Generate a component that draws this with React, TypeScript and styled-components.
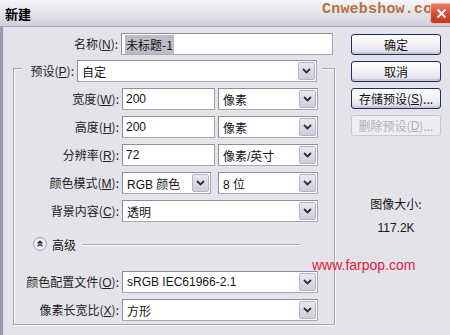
import React from 'react';
import styled, { createGlobalStyle } from 'styled-components';

const GlobalStyle = createGlobalStyle`
  html, body { margin: 0; padding: 0; background: #e4e3ea; }
  body {
    font-family: "Liberation Sans", "Noto Sans CJK SC", sans-serif;
    font-size: 12px;
    color: #141414;
  }
`;

const Window = styled.div`
  position: relative;
  width: 450px;
  height: 335px;
  overflow: hidden;
  display: flex;
  flex-direction: column;
  background: #e4e3ea;
`;

const TitleBar = styled.div`
  flex: none;
  height: 26px;
  display: flex;
  align-items: center;
  padding-left: 5px;
  background: linear-gradient(#f6f6f9, #e2e2ea 55%, #cfcfdb);
  border-bottom: 1px solid #a9a9bb;
`;

const Title = styled.div`
  font-family: "Noto Sans CJK SC", sans-serif;
  font-weight: 700;
  font-size: 13px;
  color: #000;
  flex: 1;
`;

const Watermark = styled.div`
  position: absolute;
  left: 322px;
  top: 1px;
  font-family: "Liberation Mono", monospace;
  font-weight: 700;
  font-size: 15px;
  color: #b96f3c;
  letter-spacing: 0.2px;
`;

const CloseButton = styled.div`
  position: relative;
  z-index: 1;
  flex: none;
  width: 21px;
  height: 19px;
  margin-right: -3px;
  border-radius: 3px;
  border: 1px solid #f0b8a8;
  background: linear-gradient(#e87c64, #d2492f 60%, #c23a22);
  display: flex;
  align-items: center;
  justify-content: center;
`;

const Body = styled.div`
  flex: 1;
  display: flex;
  padding: 6px 0 0 10px;
  border-left: 3px solid #9c9cb0;
  box-shadow: inset 1px 0 #d8d8e4;
`;

const Main = styled.div`
  width: 323px;
  display: flex;
  flex-direction: column;
`;

const Side = styled.div`
  width: 90px;
  margin-left: 15px;
  padding-top: 1px;
  display: flex;
  flex-direction: column;
  gap: 6px;
`;

const Row = styled.div`
  display: flex;
  align-items: center;
  height: 22px;
`;

const NameRow = styled(Row)`
  padding-left: 9px;
`;

const Label = styled.span<{ $w?: number }>`
  width: ${(p) => p.$w ?? 97}px;
  margin-right: 3px;
  text-align: right;
  white-space: nowrap;
  font-family: "Noto Sans CJK SC", sans-serif;
  font-size: 12px;
  line-height: 22px;
  color: #222;
`;

const Key = styled.span`
  text-decoration: underline;
  font-family: "Liberation Sans", sans-serif;
`;

const TextField = styled.div<{ $w: number }>`
  width: ${(p) => p.$w}px;
  height: 22px;
  box-sizing: border-box;
  display: flex;
  align-items: center;
  padding-left: 3px;
  background: #fff;
  border: 1px solid #a6a6b4;
  border-top-color: #8e8e9e;
  border-left-color: #8e8e9e;
  margin-right: 3px;
  white-space: nowrap;
`;

const Selected = styled.span`
  background: #bcbcc6;
  color: #111;
  padding: 1px 1px;
  font-family: "Noto Sans CJK SC", sans-serif;
`;

const Combo = styled.div<{ $w: number; $mr: number }>`
  flex: none;
  width: ${(p) => p.$w}px;
  height: 22px;
  box-sizing: border-box;
  display: flex;
  align-items: center;
  background: #fff;
  border: 1px solid #a6a6b4;
  border-top-color: #8e8e9e;
  border-left-color: #8e8e9e;
  padding: 1px;
  margin-right: ${(p) => p.$mr}px;
`;

const ComboText = styled.span`
  flex: 1;
  padding-left: 3px;
  white-space: nowrap;
  overflow: hidden;
  font-family: "Liberation Sans", "Noto Sans CJK SC", sans-serif;
`;

const ArrowBox = styled.span`
  flex: none;
  width: 17px;
  height: 18px;
  box-sizing: border-box;
  border: 1px solid #b4b4c6;
  border-radius: 2px;
  background: linear-gradient(#e8e8f0, #cfcfdc);
  display: flex;
  align-items: center;
  justify-content: center;
`;

const Group = styled.fieldset`
  width: 319px;
  box-sizing: border-box;
  margin: 5px 0 0 0;
  padding: 12px 12px 3px 8px;
  border: 1px solid #a4a4b2;
  box-shadow: 1px 1px 0 #fbfbfd, inset 1px 1px 0 #fbfbfd;
  display: flex;
  flex-direction: column;
  gap: 6px;
`;

const Legend = styled.legend`
  width: 300px;
  height: 16px;
  box-sizing: border-box;
  padding: 0 2px 0 0;
  background: #e4e3ea;
  display: flex;
  align-items: flex-start;
`;

const AdvancedRow = styled.div`
  display: flex;
  align-items: center;
  height: 16px;
  margin: 8px 0 13px 11px;
`;

const AdvancedText = styled.span`
  font-family: "Noto Sans CJK SC", sans-serif;
  margin: 0 6px 0 5px;
`;

const Rule = styled.div`
  width: 218px;
  height: 1px;
  background: #a8a8b6;
  box-shadow: 0 1px 0 #fbfbfd;
`;

const Button = styled.div<{ $disabled?: boolean }>`
  height: 21px;
  box-sizing: border-box;
  border-radius: 3px;
  display: flex;
  align-items: center;
  justify-content: center;
  font-family: "Noto Sans CJK SC", sans-serif;
  font-size: 12px;
  border: 1px solid ${(p) => (p.$disabled ? '#c6c6d0' : '#1f2f62')};
  color: ${(p) => (p.$disabled ? '#aeaeb8' : '#111')};
  background: ${(p) =>
    p.$disabled ? '#eeeef2' : 'linear-gradient(#ffffff, #f0f0f4 55%, #dcdce6)'};
  box-shadow: ${(p) => (p.$disabled ? 'none' : 'inset 0 -2px 0 #c4c8dc, inset 0 1px 0 #fff')};
`;

const Info = styled.div`
  margin-top: 53px;
  display: flex;
  flex-direction: column;
  align-items: center;
  gap: 9px;
  font-size: 12px;
`;

const InfoLabel = styled.span`
  font-family: "Noto Sans CJK SC", sans-serif;
`;

const Link = styled.div`
  position: absolute;
  left: 312px;
  top: 257px;
  font-family: "Liberation Sans", sans-serif;
  font-size: 14px;
  color: #e0203c;
`;

const Chevron = () => (
  <svg width="9" height="6" viewBox="0 0 9 6">
    <path d="M1 1 L4.5 4.5 L8 1" fill="none" stroke="#2e2e40" strokeWidth="1.8" />
  </svg>
);

const ComboBox = ({ w, mr = 3, children }: { w: number; mr?: number; children: React.ReactNode }) => (
  <Combo $w={w} $mr={mr}>
    <ComboText>{children}</ComboText>
    <ArrowBox>
      <Chevron />
    </ArrowBox>
  </Combo>
);

const CollapseIcon = () => (
  <svg width="14" height="14" viewBox="0 0 14 14">
    <circle cx="7" cy="7" r="6.3" fill="#f6f6f9" stroke="#9a9aaa" />
    <path d="M4.5 6.5 L7 4.2 L9.5 6.5 M4.5 9.3 L7 7 L9.5 9.3" fill="none" stroke="#2a2a38" strokeWidth="1.3" />
  </svg>
);

const CloseX = () => (
  <svg width="11" height="11" viewBox="0 0 11 11">
    <path d="M1.5 1.5 L9.5 9.5 M9.5 1.5 L1.5 9.5" stroke="#fff" strokeWidth="2" />
  </svg>
);

export default function App() {
  return (
    <>
      <GlobalStyle />
      <Window>
        <TitleBar>
          <Title>新建</Title>
          <CloseButton>
            <CloseX />
          </CloseButton>
        </TitleBar>
        <Watermark>Cnwebshow.com</Watermark>
        <Body>
          <Main>
            <NameRow>
              <Label>
                名称(<Key>N</Key>):
              </Label>
              <TextField $w={214}>
                <Selected>未标题-1</Selected>
              </TextField>
            </NameRow>
            <Group>
              <Legend>
                <Label $w={57}>
                  预设(<Key>P</Key>):
                </Label>
                <ComboBox w={240}>自定</ComboBox>
              </Legend>
              <Row>
                <Label>
                  宽度(<Key>W</Key>):
                </Label>
                <TextField $w={93}>200</TextField>
                <ComboBox w={100}>像素</ComboBox>
              </Row>
              <Row>
                <Label>
                  高度(<Key>H</Key>):
                </Label>
                <TextField $w={93}>200</TextField>
                <ComboBox w={100}>像素</ComboBox>
              </Row>
              <Row>
                <Label>
                  分辨率(<Key>R</Key>):
                </Label>
                <TextField $w={93}>72</TextField>
                <ComboBox w={100}>像素/英寸</ComboBox>
              </Row>
              <Row>
                <Label>
                  颜色模式(<Key>M</Key>):
                </Label>
                <ComboBox w={89} mr={7}>
                  RGB 颜色
                </ComboBox>
                <ComboBox w={100}>8 位</ComboBox>
              </Row>
              <Row>
                <Label>
                  背景内容(<Key>C</Key>):
                </Label>
                <ComboBox w={196}>透明</ComboBox>
              </Row>
              <AdvancedRow>
                <CollapseIcon />
                <AdvancedText>高级</AdvancedText>
                <Rule />
              </AdvancedRow>
              <Row>
                <Label>
                  颜色配置文件(<Key>O</Key>):
                </Label>
                <ComboBox w={196}>sRGB IEC61966-2.1</ComboBox>
              </Row>
              <Row>
                <Label>
                  像素长宽比(<Key>X</Key>):
                </Label>
                <ComboBox w={196}>方形</ComboBox>
              </Row>
            </Group>
          </Main>
          <Side>
            <Button>确定</Button>
            <Button>取消</Button>
            <Button>
              存储预设(<Key>S</Key>)...
            </Button>
            <Button $disabled>
              删除预设(<Key>D</Key>)...
            </Button>
            <Info>
              <InfoLabel>图像大小:</InfoLabel>
              <span>117.2K</span>
            </Info>
          </Side>
        </Body>
        <Link>www.farpop.com</Link>
      </Window>
    </>
  );
}
